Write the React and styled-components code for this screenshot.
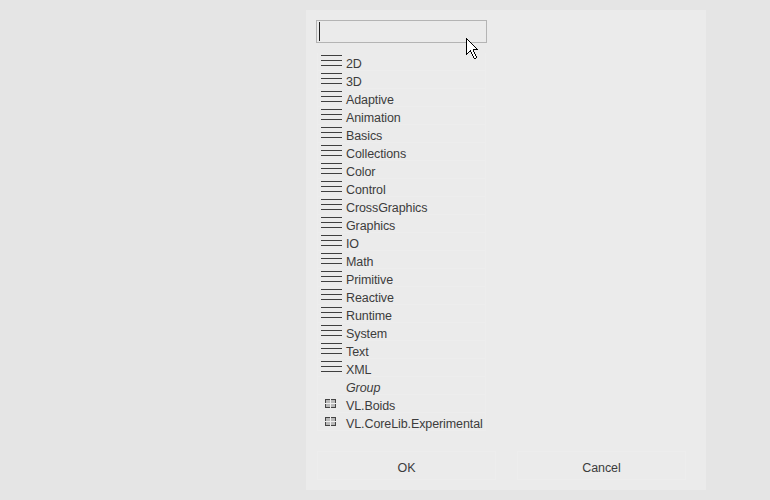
import React from "react";
import styled, { createGlobalStyle } from "styled-components";

const Global = createGlobalStyle`
  * { box-sizing: border-box; }
  body { margin: 0; background: #e5e5e5; overflow: hidden; }
`;

const Stage = styled.main`
  position: relative;
  display: flex;
  width: 770px;
  height: 500px;
  padding: 10px 64px 10px 306px;
  background: #e5e5e5;
  font-family: "Liberation Sans", Arial, sans-serif;
  font-size: 12.5px;
  letter-spacing: -0.1px;
  color: #3c3c3c;
`;

const Panel = styled.section`
  display: flex;
  flex-direction: column;
  width: 400px;
  height: 480px;
  padding: 10px;
  background: #ebebeb;
`;

const SearchField = styled.div`
  width: 171px;
  height: 23px;
  padding: 1px 2px;
  border: 1px solid #b4b4b4;
`;

const Caret = styled.div`
  width: 1px;
  height: 19px;
  background: #1e1e1e;
`;

const List = styled.ul`
  width: 169px;
  margin: 10px 0 0 1px;
  padding: 0;
  list-style: none;
`;

const Row = styled.li`
  display: flex;
  height: 18px;
  padding-left: 3px;
  border: 1px solid #ededed;
  border-top: 0;
  font-style: ${(p) => (p.$italic ? "italic" : "normal")};
`;

const IconCell = styled.span`
  width: 25px;
  flex: none;
  display: block;
  svg { display: block; }
`;

const Label = styled.span`
  line-height: 22px;
  height: 18px;
  white-space: nowrap;
`;

const Actions = styled.footer`
  display: grid;
  grid-template-columns: 179px 169px;
  column-gap: 21px;
  margin: auto 0 0 1px;
`;

const Button = styled.button`
  height: 29px;
  padding: 4px 0 0;
  border: 1px solid #ededed;
  background: transparent;
  font: inherit;
  letter-spacing: inherit;
  color: inherit;
`;

const Pointer = styled.svg`
  position: absolute;
  left: 466px;
  top: 38px;
`;

const Lines = () => (
  <svg width="25" height="16" shapeRendering="crispEdges" fill="#3f3f3f">
    <rect x="0" y="2" width="21" height="1" />
    <rect x="0" y="7" width="21" height="1" />
    <rect x="0" y="12" width="21" height="1" />
  </svg>
);

const Grid = () => (
  <svg width="25" height="16" shapeRendering="crispEdges">
    <rect x="4" y="4" width="11" height="9" fill="#444" />
    <rect x="5" y="5" width="9" height="7" fill="#b9b9b9" />
    <rect x="4" y="8" width="11" height="1" fill="#eee" />
    <rect x="9" y="4" width="1" height="9" fill="#eee" />
  </svg>
);

const arrow = [
  "X", "XX", "X.X", "X..X", "X...X", "X....X", "X.....X", "X......X",
  "X.......X", "X........X", "X.........X", "X......XXXXX", "X...X..X",
  "X..XX..X", "X.X  X..X", "XX   X..X", "X     X..X", "      X..X",
  "       X..X", "       X..X", "        XX",
];

const pixels = (ch) =>
  arrow
    .flatMap((row, y) =>
      [...row].map((c, x) => (c === ch ? `M${x} ${y}h1v1h-1z` : ""))
    )
    .join("");

const categories = [
  "2D", "3D", "Adaptive", "Animation", "Basics", "Collections", "Color",
  "Control", "CrossGraphics", "Graphics", "IO", "Math", "Primitive",
  "Reactive", "Runtime", "System", "Text", "XML",
];

const entries = [
  ...categories.map((name) => ({ name, icon: <Lines /> })),
  { name: "Group", italic: true },
  { name: "VL.Boids", icon: <Grid /> },
  { name: "VL.CoreLib.Experimental", icon: <Grid /> },
];

export default function App() {
  return (
    <>
      <Global />
      <Stage>
        <Panel>
          <SearchField><Caret /></SearchField>
          <List>
            {entries.map((e) => (
              <Row key={e.name} $italic={e.italic}>
                <IconCell>{e.icon}</IconCell>
                <Label>{e.name}</Label>
              </Row>
            ))}
          </List>
          <Actions>
            <Button>OK</Button>
            <Button>Cancel</Button>
          </Actions>
        </Panel>
        <Pointer width="12" height="21" shapeRendering="crispEdges">
          <path d={pixels("X")} fill="#000" />
          <path d={pixels(".")} fill="#fff" />
        </Pointer>
      </Stage>
    </>
  );
}
